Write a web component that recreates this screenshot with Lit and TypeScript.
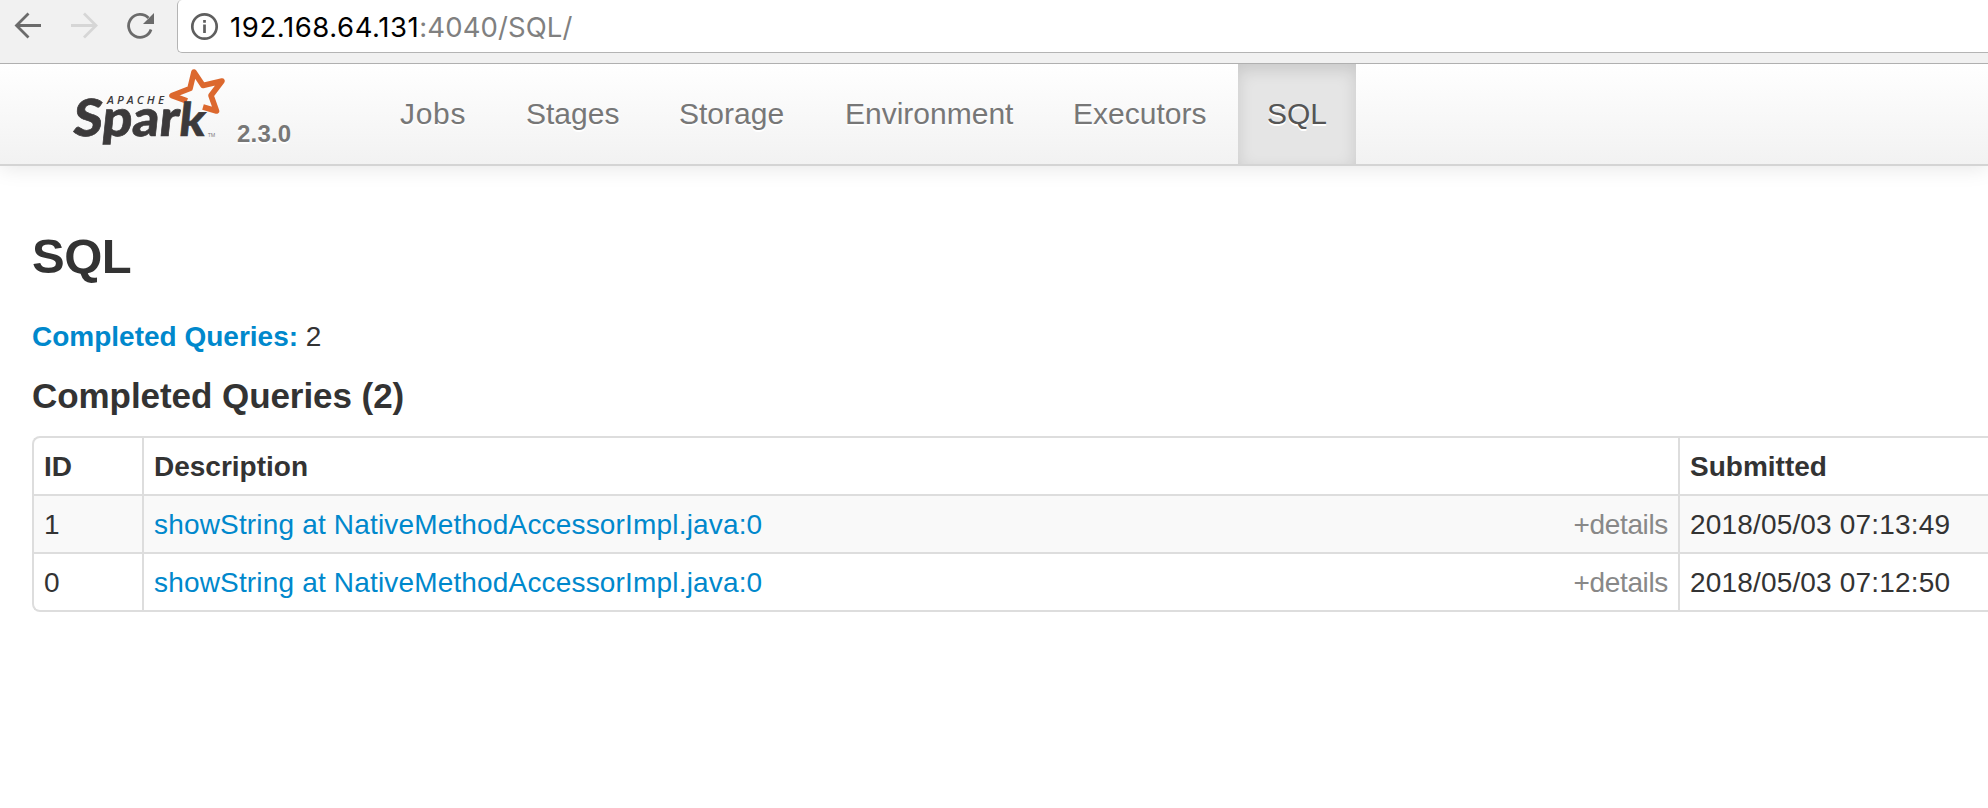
import { LitElement, html, css } from "lit";
import { customElement } from "lit/decorators.js";
import { classMap } from "lit/directives/class-map.js";

const tabs = ["Jobs", "Stages", "Storage", "Environment", "Executors", "SQL"];
const queries = [
  { id: 1, submitted: "2018/05/03 07:13:49" },
  { id: 0, submitted: "2018/05/03 07:12:50" },
];

@customElement("browser-bar")
class BrowserBar extends LitElement {
  static styles = css`
    :host { display: flex; height: 63px; background: #f1f1f1; border-bottom: 1px solid #b0b0b0; position: relative; z-index: 1; }
    .icons { flex: none; width: 177px; height: 53px; display: block; }
    .field { flex: 1; height: 52px; background: #fff; border: solid #b4b4b4; border-width: 0 0 1px 1px; border-radius: 5px 0 0 5px; display: flex; }
    .info { flex: none; width: 52px; height: 52px; }
    .url { font: 27.5px/54px Inter, sans-serif; color: #808080; white-space: pre; letter-spacing: 0.1px; }
    .host { color: #000; letter-spacing: 0.58px; }
  `;
  render() {
    return html`
      <svg class="icons" viewBox="0 0 177 53" fill="none" stroke-width="2.8">
        <path d="M41 25.5H17M28.5 13.5L16.5 25.5L28.5 37.5" stroke="#6b6b6b" />
        <path d="M71 25.5H95M84 13.5L96 25.5L84 37.5" stroke="#d6d6d6" />
        <path d="M151 29.5A11.5 11.5 0 1 1 148.5 18" stroke="#6b6b6b" />
        <path d="M154 13V24H143Z" fill="#6b6b6b" />
      </svg>
      <div class="field">
        <svg class="info" viewBox="178 0 52 52" fill="none">
          <circle cx="204.5" cy="26.5" r="12.2" stroke="#5f5f5f" stroke-width="2.7" />
          <path d="M204.5 20V22.7M204.5 24.5V33" stroke="#5f5f5f" stroke-width="2.7" />
        </svg>
        <div class="url"><span class="host">192.168.64.131</span>:4040/SQL/</div>
      </div>`;
  }
}

@customElement("spark-nav")
class SparkNav extends LitElement {
  static styles = css`
    :host { display: flex; height: 100px; border-bottom: 2px solid #d4d4d4; background: linear-gradient(#fff, #f2f2f2); box-shadow: 0 2px 20px rgba(0,0,0,.1); font-family: "Liberation Sans", Arial, sans-serif; text-shadow: 0 2px 0 #fff; }
    .logo { flex: none; width: 165px; height: 86px; margin-left: 70px; display: block; text-shadow: none; }
    .spark { font: 900 51px Lato, sans-serif; fill: #3c3a3b; stroke: #3c3a3b; stroke-width: 0.7px; }
    .k { font-size: 46px; }
    .apache { font: italic 600 11.5px "Open Sans", sans-serif; fill: #3c3a3b; }
    .tm { font: 5px "Open Sans", sans-serif; fill: #777; }
    .version { font-size: 24px; line-height: 30px; font-weight: bold; color: #777; width: 133px; padding: 55px 0 0 2px; letter-spacing: 0.2px; }
    .tabs { display: grid; grid-template-columns: 126px 153px 166px 228px 195px 118px; }
    .tab { font-size: 30px; line-height: 40px; color: #777; padding: 30px 0 30px 30px; white-space: nowrap; }
    .tab:first-child { letter-spacing: 0.7px; }
    .active { color: #555; background: #e5e5e5; box-shadow: inset 0 6px 16px rgba(0,0,0,.125); padding-left: 29px; }
  `;
  render() {
    return html`
      <svg class="logo" viewBox="70 64 165 86">
        <path d="M187 101L172 95.5L190 88.5L194 72L203 85.5L222 81L211 95.5L216.5 111L203 107" fill="none" stroke="#dc682e" stroke-width="5.6" stroke-linejoin="round" />
        <text class="apache" x="107" y="104" textLength="57">APACHE</text>
        <text class="spark" transform="translate(72 136) skewX(-6)" x="0" y="0" textLength="132" lengthAdjust="spacingAndGlyphs">Spar<tspan class="k">k</tspan></text>
        <text class="tm" x="208" y="137">TM</text>
      </svg>
      <div class="version">2.3.0</div>
      <div class="tabs">${tabs.map((t) => html`<div class=${classMap({ tab: true, active: t === "SQL" })}>${t}</div>`)}</div>`;
  }
}

@customElement("app-root")
class AppRoot extends LitElement {
  static styles = css`
    :host { display: block; height: 808px; overflow: hidden; background: #fff; color: #333; font: 28px/40px "Liberation Sans", Arial, sans-serif; }
    main { padding: 50px 0 0 32px; }
    h3 { margin: 0; font-size: 49px; line-height: 80px; letter-spacing: -0.5px; }
    .summary { margin-top: 20px; padding-top: 1px; height: 39px; }
    a { color: #0088cc; }
    h4 { margin: 20px 0; font-size: 35px; line-height: 40px; letter-spacing: -0.06px; }
    .table { display: grid; grid-template-columns: 108px 1536px 400px; border: 2px solid #ddd; border-right: 0; border-radius: 8px 0 0 8px; margin-right: -100px; overflow: hidden; }
    .cell { height: 39px; padding: 9px 10px 8px; border-left: 2px solid #ddd; border-top: 2px solid #ddd; display: flex; justify-content: space-between; white-space: nowrap; }
    .cell a, .date { letter-spacing: 0.17px; }
    .first { border-left: 0; }
    .head { border-top: 0; font-weight: bold; }
    .odd { background: #f9f9f9; }
    .details { color: #888; letter-spacing: -0.35px; }
  `;
  render() {
    return html`
      <browser-bar></browser-bar>
      <spark-nav></spark-nav>
      <main>
        <h3>SQL</h3>
        <div class="summary"><a><b>Completed Queries:</b></a> 2</div>
        <h4>Completed Queries (2)</h4>
        <div class="table">
          <div class="cell head first">ID</div><div class="cell head">Description</div><div class="cell head">Submitted</div>
          ${queries.map((q, i) => {
            const odd = i % 2 === 0;
            return html`
              <div class=${classMap({ cell: true, first: true, odd })}>${q.id}</div>
              <div class=${classMap({ cell: true, odd })}><a>showString at NativeMethodAccessorImpl.java:0</a><span class="details">+details</span></div>
              <div class=${classMap({ cell: true, date: true, odd })}>${q.submitted}</div>`;
          })}
        </div>
      </main>`;
  }
}
